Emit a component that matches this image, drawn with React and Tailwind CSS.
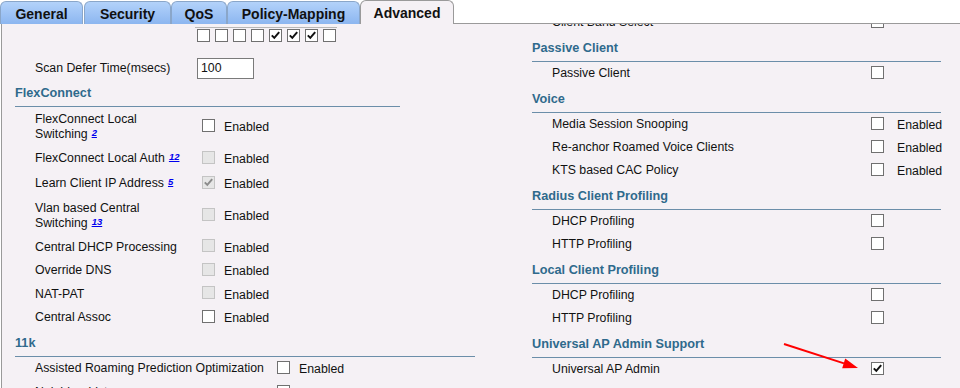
import React from "react";

const tabs = [
  { name: "General", w: "w-[83px]", gap: "" },
  { name: "Security", w: "w-[87px]", gap: "ml-[1px]" },
  { name: "QoS", w: "w-[56px]", gap: "" },
  { name: "Policy-Mapping", w: "w-[133px]", gap: "" },
];

const flexRows = [
  { label: ["FlexConnect Local", "Switching"], sup: "2", h: "h-[39px]" },
  { label: ["FlexConnect Local Auth"], sup: "12", h: "h-[25px]", disabled: true },
  { label: ["Learn Client IP Address"], sup: "5", h: "h-[25px]", disabled: true, checked: true },
  { label: ["Vlan based Central", "Switching"], sup: "13", h: "h-[39px]", disabled: true },
  { label: ["Central DHCP Processing"], h: "h-[24px]", disabled: true },
  { label: ["Override DNS"], h: "h-[23px]", disabled: true },
  { label: ["NAT-PAT"], h: "h-[24px]", disabled: true },
  { label: ["Central Assoc"], h: "h-[23px]" },
];

const rightGroups = [
  { title: "Passive Client", rows: [{ label: "Passive Client" }] },
  {
    title: "Voice",
    rows: [
      { label: "Media Session Snooping", enabled: true },
      { label: "Re-anchor Roamed Voice Clients", enabled: true },
      { label: "KTS based CAC Policy", enabled: true },
    ],
  },
  { title: "Radius Client Profiling", rows: [{ label: "DHCP Profiling" }, { label: "HTTP Profiling" }] },
  { title: "Local Client Profiling", rows: [{ label: "DHCP Profiling" }, { label: "HTTP Profiling" }] },
  { title: "Universal AP Admin Support", rows: [{ label: "Universal AP Admin", checked: true }] },
];

function Box({ checked, disabled, className = "" }) {
  return (
    <span
      className={`inline-flex h-[13px] w-[13px] shrink-0 items-center justify-center border ${
        disabled ? "border-[#c4c4c4] bg-[#e6e6e6]" : "border-[#707070] bg-white"
      } ${className}`}
    >
      {checked && (
        <svg width="11" height="11" viewBox="0 0 11 11">
          <path
            d="M1.8 5.4 L4.3 7.9 L9.2 2.2"
            fill="none"
            stroke={disabled ? "#8c8c8c" : "#111"}
            strokeWidth="2"
          />
        </svg>
      )}
    </span>
  );
}

function Heading({ children, w }) {
  return (
    <div className={`flex h-[28px] items-center border-b border-[#6b8ea9] pt-[2px] text-[12.7px] font-bold text-[#2f6a8c] ${w}`}>
      {children}
    </div>
  );
}

function Sup({ children }) {
  return (
    <sup className="relative -top-[2px] ml-[4px] text-[9.5px] font-bold italic text-[#0000ee] underline">{children}</sup>
  );
}

export default function App() {
  return (
    <div className="relative flex h-[388px] w-[960px] flex-col overflow-hidden bg-white font-['Liberation_Sans',Arial,sans-serif] text-[12.3px] text-[#111]">
      {/* tab strip */}
      <div className="flex h-[24px] shrink-0 items-end">
        {tabs.map((t) => (
          <div
            key={t.name}
            className={`flex h-[23px] ${t.w} ${t.gap} items-center justify-center rounded-t-[6px] border border-b-0 border-[#8aa6c9] bg-gradient-to-b from-[#b3d2fa] to-[#8cb6f0] pt-[2px] text-[14px] font-bold text-[#111]`}
          >
            {t.name}
          </div>
        ))}
        <div className="flex h-[24px] w-[94px] items-center justify-center rounded-t-[6px] border border-b-0 border-[#9a9a9a] bg-[#f5f1f5] pt-[2px] text-[14px] font-bold text-[#111]">
          Advanced
        </div>
        <div className="h-[24px] flex-1 border-b border-[#9a9a9a]" />
      </div>

      {/* content */}
      <div className="ml-[1px] flex flex-1 overflow-hidden border-l border-[#9a9a9a] bg-[#f5f1f5]">
        {/* left column */}
        <div className="w-[478px] shrink-0">
          <div className="ml-[193px] mt-[3px] flex w-[142px] gap-[5px] border-t border-[#b8b8b8] pl-[2px] pt-[1px]">
            {[0, 0, 0, 0, 1, 1, 1, 0].map((c, i) => (
              <Box key={i} checked={!!c} />
            ))}
          </div>
          <div className="mt-[16px] flex h-[21px] items-center">
            <div className="ml-[33px] w-[162px]">Scan Defer Time(msecs)</div>
            <div className="flex h-[21px] w-[57px] items-center border border-[#7a7a7a] bg-white pl-[3px]">100</div>
          </div>
          <div className="ml-[13px]">
            <Heading w="w-[385px]">FlexConnect</Heading>
          </div>
          {flexRows.map((r) => (
            <div key={r.label.join(" ")} className={`flex ${r.h} items-center`}>
              <div className="ml-[33px] w-[167px] leading-[15px]">
                {r.label.map((l, i) => (
                  <div key={l}>
                    {l}
                    {i === r.label.length - 1 && r.sup && <Sup>{r.sup}</Sup>}
                  </div>
                ))}
              </div>
              <Box checked={r.checked} disabled={r.disabled} className="mb-[3px]" />
              <span className="ml-[9px] mt-[2px]">Enabled</span>
            </div>
          ))}
          <div className="ml-[13px]">
            <Heading w="w-[460px]">11k</Heading>
          </div>
          <div className="flex h-[23px] items-center">
            <div className="ml-[33px] w-[242px]">Assisted Roaming Prediction Optimization</div>
            <Box className="mb-[3px]" />
            <span className="ml-[9px] mt-[2px]">Enabled</span>
          </div>
          <div className="mt-[1px] flex h-[23px] items-center">
            <div className="ml-[33px] w-[242px]">Neighbor List</div>
            <Box className="mb-[3px]" />
            <span className="ml-[9px] mt-[2px]">Enabled</span>
          </div>
        </div>

        {/* right column */}
        <div className="-mt-[13px] flex-1">
          <div className="flex h-[23px] items-center">
            <div className="ml-[72px] w-[319px]">Client Band Select</div>
            <Box className="mb-[3px]" />
          </div>
          {rightGroups.map((g) => (
            <div key={g.title}>
              <div className="ml-[52px]">
                <Heading w="w-[409px]">{g.title}</Heading>
              </div>
              {g.rows.map((r) => (
                <div key={r.label} className="flex h-[23px] items-center">
                  <div className="ml-[72px] w-[319px]">{r.label}</div>
                  <Box checked={r.checked} className="mb-[3px]" />
                  {r.enabled && <span className="ml-[13px] mt-[2px]">Enabled</span>}
                </div>
              ))}
            </div>
          ))}
        </div>
      </div>

      {/* red annotation arrow */}
      <svg className="absolute left-[780px] top-[340px]" width="84" height="34" viewBox="0 0 84 34">
        <line x1="4" y1="4" x2="64" y2="23.4" stroke="#ff0000" strokeWidth="2" />
        <polygon points="78,28 62.2,28.2 65.2,18.6" fill="#ff0000" />
      </svg>
    </div>
  );
}
